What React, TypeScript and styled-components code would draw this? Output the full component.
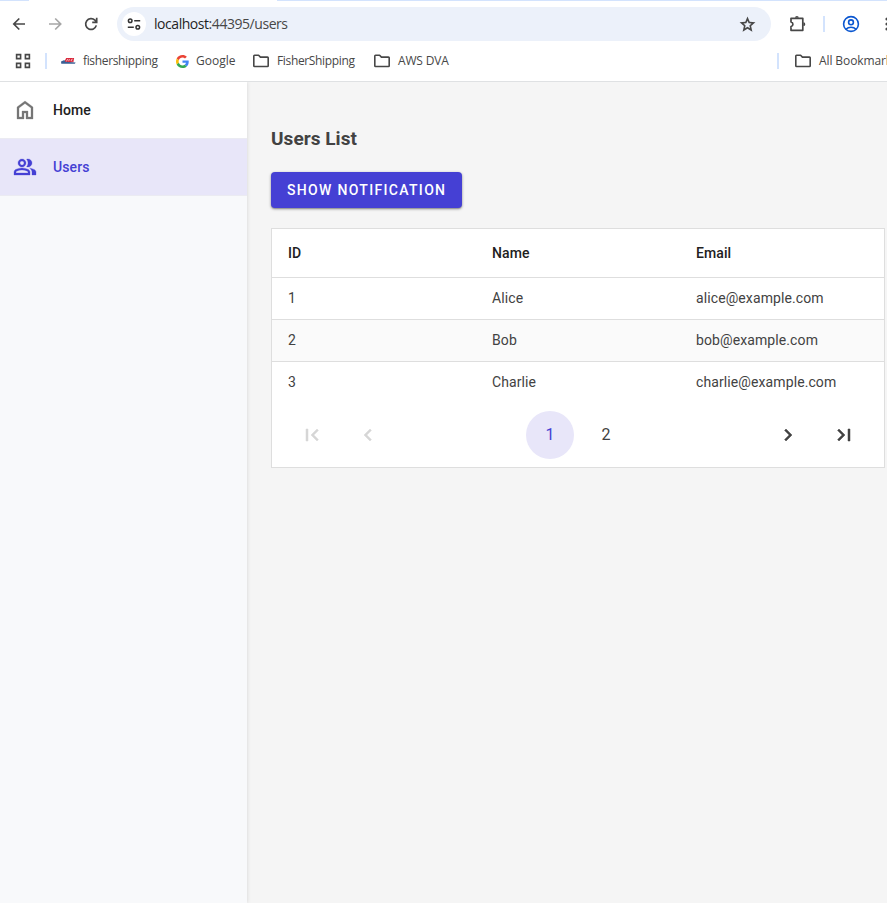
import React from "react";
import styled, { createGlobalStyle } from "styled-components";

const GlobalStyle = createGlobalStyle`
  * { box-sizing: border-box; }
  html, body { margin: 0; padding: 0; overflow: hidden; background: #f5f5f5; }
`;

const Window = styled.div`
  display: flex;
  flex-direction: column;
  width: 887px;
  height: 903px;
  overflow: hidden;
  font-family: Roboto, sans-serif;
  color: #424242;
`;

/* ---------- browser chrome ---------- */

const Chrome = styled.header`
  flex: none;
  height: 82px;
  background: #fff;
  border-bottom: 1px solid #dfe1e3;
  font-family: "Open Sans", "Noto Sans", sans-serif;
  overflow: hidden;
`;

const TabStrip = styled.div`
  display: flex;
  justify-content: space-between;
  height: 1px;
`;

const TabEdge = styled.div<{ $width: number }>`
  width: ${(p) => p.$width}px;
  background: #d3e3fd;
`;

const NavBar = styled.div`
  display: flex;
  align-items: center;
  height: 46px;
  width: 900px;
  padding-left: 9px;
`;

const IconSlot = styled.span<{ $width?: number; $color?: string; $gap?: number }>`
  flex: none;
  display: flex;
  align-items: center;
  justify-content: center;
  width: ${(p) => p.$width ?? 20}px;
  height: 20px;
  margin-left: ${(p) => p.$gap ?? 0}px;
  color: ${(p) => p.$color ?? "#474747"};
  svg { display: block; }
`;

const AddressBar = styled.div`
  flex: none;
  display: flex;
  align-items: center;
  width: 654px;
  height: 34px;
  margin-left: 16px;
  padding: 0 14px 0 5px;
  border-radius: 17px;
  background: #ecf1fa;
`;

const SiteButton = styled.span`
  display: flex;
  align-items: center;
  justify-content: center;
  width: 24px;
  height: 24px;
  border-radius: 50%;
  background: #fff;
`;

const Url = styled.span`
  flex: 1;
  margin-left: 8px;
  font-size: 14px;
  line-height: 20px;
  letter-spacing: -0.45px;
  color: #474747;
  b { font-weight: 400; color: #1f1f1f; }
`;

const Divider = styled.span<{ $gap: number }>`
  flex: none;
  width: 2px;
  height: 16px;
  margin-left: ${(p) => p.$gap}px;
  background: #d3e3fd;
`;

const BookmarksBar = styled.div`
  display: flex;
  align-items: center;
  height: 28px;
  width: 900px;
  padding-left: 13px;
`;

const Bookmark = styled.span<{ $gap: number; $width: number; $track?: number }>`
  flex: none;
  display: flex;
  align-items: center;
  gap: 7px;
  width: ${(p) => p.$width}px;
  margin-left: ${(p) => p.$gap}px;
  font-size: 12px;
  line-height: 16px;
  letter-spacing: ${(p) => p.$track ?? 0}px;
  white-space: nowrap;
  color: #474747;
  svg { flex: none; display: block; }
`;

const Spacer = styled.span`
  flex: none;
  width: 315px;
`;

/* ---------- application ---------- */

const Body = styled.div`
  flex: 1;
  display: flex;
  min-height: 0;
  overflow: hidden;
`;

const Sidebar = styled.nav`
  flex: none;
  z-index: 1;
  width: 247px;
  background: #f8f9fb;
  box-shadow: 0 0 4px rgba(0, 0, 0, 0.14);
`;

const NavItem = styled.a<{ $active?: boolean }>`
  display: flex;
  align-items: center;
  gap: 16px;
  height: 57px;
  padding-left: 13px;
  border-bottom: 1px solid #ebebf2;
  background: ${(p) => (p.$active ? "#e8e6f9" : "#fff")};
  color: ${(p) => (p.$active ? "#4540d4" : "#212121")};
  font-size: 14px;
  font-weight: 500;
  letter-spacing: 0.1px;
  svg {
    fill: ${(p) => (p.$active ? "#4540d4" : "#757575")};
    stroke: ${(p) => (p.$active ? "#4540d4" : "#757575")};
    stroke-width: 0.3px;
  }
`;

const Content = styled.main`
  flex: 1;
  padding: 45px 0 0 24px;
  background: #f5f5f5;
`;

const Title = styled.h1`
  margin: 0;
  font-size: 19px;
  font-weight: 700;
  line-height: 24px;
  letter-spacing: 0.05px;
  color: #424242;
`;

const Button = styled.button`
  display: block;
  width: 191px;
  height: 36px;
  margin: 21px 0 20px;
  padding: 0 0 0 16px;
  border: 0;
  border-radius: 4px;
  background: #4540d4;
  box-shadow: 0 1px 3px rgba(0, 0, 0, 0.4), 0 1px 1px rgba(0, 0, 0, 0.15);
  color: #fff;
  font: 500 14px/36px Roboto, sans-serif;
  letter-spacing: 1.32px;
  text-align: left;
  white-space: nowrap;
`;

const Grid = styled.section`
  width: 614px;
  height: 240px;
  border: 1px solid #dedede;
  background: #fff;
`;

const Row = styled.div<{ $header?: boolean; $alt?: boolean; $last?: boolean }>`
  display: grid;
  grid-template-columns: repeat(3, 204px);
  align-items: center;
  height: ${(p) => (p.$header ? 49 : p.$last ? 41 : 42)}px;
  padding-bottom: ${(p) => (p.$header ? 0 : p.$last ? 1 : 2)}px;
  border-bottom: ${(p) => (p.$last ? "0" : "1px solid #dedede")};
  background: ${(p) => (p.$alt ? "#fafafa" : "#fff")};
  color: ${(p) => (p.$header ? "#212121" : "#424242")};
  font-size: 14px;
  font-weight: ${(p) => (p.$header ? 500 : 400)};
  line-height: 16px;
  letter-spacing: 0.1px;
`;

const Cell = styled.span`
  padding-left: 16px;
`;

const Pager = styled.div`
  display: flex;
  justify-content: space-between;
  padding: 8px 16px;
`;

const PagerGroup = styled.div`
  display: flex;
  gap: 8px;
`;

const PageButton = styled.span<{ $active?: boolean; $disabled?: boolean }>`
  display: flex;
  align-items: center;
  justify-content: center;
  width: 48px;
  height: 48px;
  padding-bottom: 1px;
  border-radius: 50%;
  background: ${(p) => (p.$active ? "#e8e6f9" : "transparent")};
  color: ${(p) => (p.$active ? "#4540d4" : p.$disabled ? "#d6d6d6" : "#424242")};
  font-size: 16px;
  font-weight: 400;
  svg {
    margin-top: 1px;
    fill: currentColor;
    stroke: currentColor;
    stroke-width: 0.5px;
  }
`;

const MaterialIcon = ({ d, size = 24 }: { d: string; size?: number }) => (
  <svg width={size} height={size} viewBox="0 0 24 24" fill="currentColor">
    <path d={d} />
  </svg>
);

const paths = {
  home: "M6 19h3v-6h6v6h3v-9l-6-4.5L6 10v9Zm-2 2V9l8-6 8 6v12h-7v-6h-2v6H4Z",
  group:
    "M1 20v-2.8q0-.85.438-1.563Q1.875 14.925 2.6 14.55q1.55-.775 3.15-1.163Q7.35 13 9 13t3.25.387q1.6.388 3.15 1.163.725.375 1.163 1.087Q17 16.35 17 17.2V20Zm18 0v-3q0-1.1-.612-2.113Q17.775 13.875 16.65 13.15q1.275.15 2.4.512 1.125.363 2.1.888.9.5 1.375 1.112Q23 16.275 23 17v3ZM9 12q-1.65 0-2.825-1.175Q5 9.65 5 8q0-1.65 1.175-2.825Q7.35 4 9 4q1.65 0 2.825 1.175Q13 6.35 13 8q0 1.65-1.175 2.825Q10.65 12 9 12Zm10-4q0 1.65-1.175 2.825Q16.65 12 15 12q-.275 0-.7-.062-.425-.063-.7-.138.675-.8 1.037-1.775Q15 9.05 15 8q0-1.05-.363-2.025Q14.275 5 13.6 4.2q.35-.125.7-.163Q14.65 4 15 4q1.65 0 2.825 1.175Q19 6.35 19 8ZM3 18h12v-.8q0-.275-.137-.5-.138-.225-.363-.35-1.35-.675-2.725-1.013Q10.4 15 9 15t-2.775.337Q4.85 15.675 3.5 16.35q-.225.125-.362.35-.138.225-.138.5Zm6-8q.825 0 1.413-.588Q11 8.825 11 8t-.587-1.413Q9.825 6 9 6q-.825 0-1.412.587Q7 7.175 7 8t.588 1.412Q8.175 10 9 10Z",
  first: "M18.41 16.59L13.82 12l4.59-4.59L17 6l-6 6 6 6zM6 6h2v12H6z",
  prev: "M15.41 7.41L14 6l-6 6 6 6 1.41-1.41L10.83 12z",
  next: "M10 6L8.59 7.41 13.17 12l-4.58 4.59L10 18l6-6z",
  last: "M5.59 7.41L10.18 12l-4.59 4.59L7 18l6-6-6-6zM16 6h2v12h-2z",
  star: "m8.85 16.83 3.15-1.9 3.15 1.93-.83-3.6 2.78-2.4-3.65-.33L12 7.13l-1.45 3.37-3.65.33 2.78 2.42ZM5.83 21l1.62-7.02L2 9.25l7.2-.63L12 2l2.8 6.63 7.2.62-5.45 4.73L18.18 21 12 17.28Z",
};

const Arrow = ({ flip = false }: { flip?: boolean }) => (
  <svg width="20" height="20" viewBox="0 0 20 20" fill="none" stroke="currentColor" strokeWidth="1.7">
    {flip ? <path d="M4 10h11.5M10.2 4.5 15.7 10l-5.5 5.5" /> : <path d="M16 10H5M10.3 4.5 4.8 10l5.5 5.5" />}
  </svg>
);

const Reload = () => (
  <svg width="20" height="20" viewBox="0 0 20 20" fill="none" stroke="currentColor" strokeWidth="1.7">
    <path d="M15.3 11.4a5.4 5.4 0 1 1-1.4-5.2l1.7 1.7M15.7 3.8v4.5h-4.5" />
  </svg>
);

const Tune = () => (
  <svg width="16" height="16" viewBox="0 0 16 16" fill="none" stroke="#333" strokeWidth="1.5">
    <circle cx="4.2" cy="4.8" r="1.8" />
    <path d="M8.2 4.8h6M1.8 11.2h6" />
    <circle cx="11.8" cy="11.2" r="1.8" />
  </svg>
);

const Puzzle = () => (
  <svg width="20" height="20" viewBox="0 0 20 20">
    <path d="M4 4.3h11.8v12H4v-3.6a2.4 2.4 0 0 0 0-4.7Z" fill="none" stroke="currentColor" strokeWidth="1.7" strokeLinejoin="round" />
    <path d="M8 3.8a1.9 1.9 0 0 1 3.8 0ZM16.4 8.3a1.9 1.9 0 0 1 0 3.8Z" fill="currentColor" />
  </svg>
);

const Profile = () => (
  <svg width="18" height="18" viewBox="0 0 18 18" fill="none" stroke="currentColor" strokeWidth="1.6">
    <circle cx="9" cy="9" r="7.4" />
    <circle cx="9" cy="7.3" r="2.4" />
    <path d="M3.9 14.3c2.8-2.8 7.4-2.8 10.2 0" />
  </svg>
);

const Dots = () => (
  <svg width="4" height="16" viewBox="0 0 4 16" fill="currentColor">
    <circle cx="2" cy="3" r="1.6" />
    <circle cx="2" cy="8" r="1.6" />
    <circle cx="2" cy="13" r="1.6" />
  </svg>
);

const Apps = () => (
  <svg width="16" height="16" viewBox="0 0 16 16" fill="none" stroke="currentColor" strokeWidth="1.6">
    <path d="M1.6 1.6h4v4h-4zM10.4 1.6h4v4h-4zM1.6 10.4h4v4h-4zM10.4 10.4h4v4h-4z" />
  </svg>
);

const Folder = () => (
  <svg width="18" height="16" viewBox="0 0 18 16" fill="none" stroke="#474747" strokeWidth="1.6" strokeLinejoin="round">
    <path d="M1.8 12.8V3q0-.7.7-.7h4.1l1.8 1.8h7.1q.7 0 .7.7v8q0 .7-.7.7h-13q-.7 0-.7-.7Z" />
  </svg>
);

const GoogleMark = () => (
  <svg width="13" height="13" viewBox="0 0 48 48">
    <path fill="#EA4335" d="M24 9.5c3.54 0 6.71 1.22 9.21 3.6l6.85-6.85C35.9 2.38 30.47 0 24 0 14.62 0 6.51 5.38 2.56 13.22l7.98 6.19C12.43 13.72 17.74 9.5 24 9.5z" />
    <path fill="#4285F4" d="M46.98 24.55c0-1.57-.15-3.09-.38-4.55H24v9.02h12.94c-.58 2.96-2.26 5.48-4.78 7.18l7.73 6c4.51-4.18 7.09-10.36 7.09-17.65z" />
    <path fill="#FBBC05" d="M10.53 28.59c-.48-1.45-.76-2.99-.76-4.59s.27-3.14.76-4.59l-7.98-6.19C.92 16.46 0 20.12 0 24c0 3.88.92 7.54 2.56 10.78l7.97-6.19z" />
    <path fill="#34A853" d="M24 48c6.48 0 11.93-2.13 15.89-5.81l-7.73-6c-2.15 1.45-4.92 2.3-8.16 2.3-6.26 0-11.57-4.22-13.47-9.91l-7.98 6.19C6.51 42.62 14.62 48 24 48z" />
  </svg>
);

const ShippingMark = () => (
  <svg width="15" height="8" viewBox="0 0 16 8">
    <path d="M5.5.8H14l-.8 4.4H3.3Z" fill="#d9283b" />
    <path d="M0 4.4 3.6 3l1 1.8L15.6 5.6l-.8 1.2H.3Z" fill="#3a5f95" />
    <path d="M7.2 1.8 5.8 4.4M9 1.9 8.2 4.2M12.4 2l-1.8 1 1 1.4" stroke="#fff" strokeWidth=".7" fill="none" />
  </svg>
);

const users = [
  { id: 1, name: "Alice", email: "alice@example.com" },
  { id: 2, name: "Bob", email: "bob@example.com" },
  { id: 3, name: "Charlie", email: "charlie@example.com" },
];

export default function App() {
  return (
    <Window>
      <GlobalStyle />
      <Chrome>
        <TabStrip>
          <TabEdge $width={29} />
          <TabEdge $width={610} />
        </TabStrip>
        <NavBar>
          <IconSlot><Arrow /></IconSlot>
          <IconSlot $gap={16} $color="#a6a6a6"><Arrow flip /></IconSlot>
          <IconSlot $gap={16}><Reload /></IconSlot>
          <AddressBar>
            <SiteButton><Tune /></SiteButton>
            <Url><b>localhost</b>:44395/users</Url>
            <IconSlot><MaterialIcon d={paths.star} size={19} /></IconSlot>
          </AddressBar>
          <IconSlot $gap={16}><Puzzle /></IconSlot>
          <Divider $gap={16} />
          <IconSlot $gap={16} $color="#0b57d0"><Profile /></IconSlot>
          <IconSlot $gap={24} $width={4}><Dots /></IconSlot>
        </NavBar>
        <BookmarksBar>
          <IconSlot><Apps /></IconSlot>
          <Divider $gap={12} />
          <Bookmark $gap={14} $width={97} $track={-0.35}><ShippingMark />fishershipping</Bookmark>
          <Bookmark $gap={18} $width={59}><GoogleMark />Google</Bookmark>
          <Bookmark $gap={17} $width={103} $track={-0.35}><Folder />FisherShipping</Bookmark>
          <Bookmark $gap={18} $width={76} $track={-0.15}><Folder />AWS DVA</Bookmark>
          <Spacer />
          <Divider $gap={13} />
          <Bookmark $gap={15} $width={100} $track={-0.1}><Folder />All Bookmarks</Bookmark>
        </BookmarksBar>
      </Chrome>
      <Body>
        <Sidebar>
          <NavItem><MaterialIcon d={paths.home} />Home</NavItem>
          <NavItem $active><MaterialIcon d={paths.group} />Users</NavItem>
        </Sidebar>
        <Content>
          <Title>Users List</Title>
          <Button>SHOW NOTIFICATION</Button>
          <Grid>
            <Row $header>
              <Cell>ID</Cell>
              <Cell>Name</Cell>
              <Cell>Email</Cell>
            </Row>
            {users.map((u, i) => (
              <Row key={u.id} $alt={i % 2 === 1} $last={i === users.length - 1}>
                <Cell>{u.id}</Cell>
                <Cell>{u.name}</Cell>
                <Cell>{u.email}</Cell>
              </Row>
            ))}
            <Pager>
              <PagerGroup>
                <PageButton $disabled><MaterialIcon d={paths.first} /></PageButton>
                <PageButton $disabled><MaterialIcon d={paths.prev} /></PageButton>
              </PagerGroup>
              <PagerGroup>
                <PageButton $active>1</PageButton>
                <PageButton>2</PageButton>
              </PagerGroup>
              <PagerGroup>
                <PageButton><MaterialIcon d={paths.next} /></PageButton>
                <PageButton><MaterialIcon d={paths.last} /></PageButton>
              </PagerGroup>
            </Pager>
          </Grid>
        </Content>
      </Body>
    </Window>
  );
}
